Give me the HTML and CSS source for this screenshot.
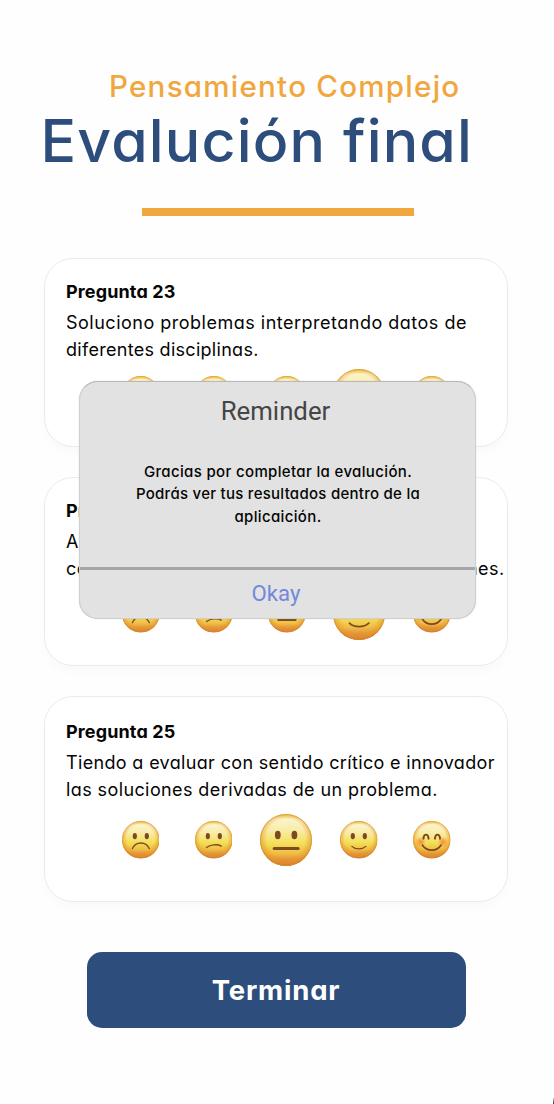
FILE: index.html
```
<!DOCTYPE html>
<html lang="es">
<head>
<meta charset="utf-8">
<title>Evalución final</title>
<link rel="stylesheet" href="styles.css">
</head>
<body>
<svg class="defs" width="0" height="0" aria-hidden="true">
  <defs>
    <linearGradient id="skin" x1="0" y1="0" x2="0" y2="1">
      <stop offset="0" stop-color="#f3cf45"/>
      <stop offset=".1" stop-color="#fbf3cc"/>
      <stop offset=".3" stop-color="#f9edab"/>
      <stop offset=".58" stop-color="#f3de55"/>
      <stop offset=".76" stop-color="#f0bd45"/>
      <stop offset="1" stop-color="#d26a30"/>
    </linearGradient>
    <radialGradient id="rim" cx=".5" cy=".46" r=".54">
      <stop offset=".68" stop-color="#e69a2a" stop-opacity="0"/>
      <stop offset=".9" stop-color="#e6962c" stop-opacity=".6"/>
      <stop offset="1" stop-color="#d0702f" stop-opacity=".9"/>
    </radialGradient>
    <radialGradient id="blush">
      <stop offset="0" stop-color="#f4693c" stop-opacity=".75"/>
      <stop offset="1" stop-color="#f4693c" stop-opacity="0"/>
    </radialGradient>
    <g id="ball"><circle cx="26" cy="26" r="26" fill="url(#skin)"/><circle cx="26" cy="26" r="26" fill="url(#rim)"/><circle cx="26" cy="26" r="25.5" fill="none" stroke="#d6962f" stroke-opacity=".65" stroke-width="1"/></g>
    <g id="eyes" fill="#7c4a22"><ellipse cx="17.8" cy="21" rx="2.9" ry="4.2"/><ellipse cx="34.4" cy="21" rx="2.9" ry="4.2"/></g>
    <symbol id="sad" viewBox="0 0 52 52"><use href="#ball"/><use href="#eyes"/><path class="mouth" d="M14.3 38.5C19 27.8 33 27.8 38 38.5"/></symbol>
    <symbol id="unsure" viewBox="0 0 52 52"><use href="#ball"/><use href="#eyes"/><path class="mouth" d="M16 36.8C21 32.5 31 31.8 36.5 34.8"/></symbol>
    <symbol id="neutral" viewBox="0 0 52 52"><use href="#ball"/><use href="#eyes"/><path class="mouth flat" d="M14.2 34.4H38.2"/></symbol>
    <symbol id="smile" viewBox="0 0 52 52"><use href="#ball"/><use href="#eyes"/><path class="mouth" d="M16.5 35.2C21 39.8 31 39.8 35.8 35.2"/></symbol>
    <symbol id="happy" viewBox="0 0 52 52"><use href="#ball"/><circle cx="10.5" cy="29" r="7.5" fill="url(#blush)"/><circle cx="41.5" cy="29" r="7.5" fill="url(#blush)"/><path class="mouth eye" d="M14.5 24.5C15 17 21 17 21.6 24.5M30.4 24.5C31 17 37 17 37.5 24.5"/><path class="mouth grin" d="M13.2 33.5C19 42.5 33 42.5 38.8 33.5"/></symbol>
  </defs>
</svg>
<main class="screen">
  <header class="header">
    <p class="course">Pensamiento Complejo</p>
    <h1 class="title">Evalución final</h1>
    <div class="rule"></div>
  </header>

  <section class="card first">
    <h2 class="card-title">Pregunta 23</h2>
    <p class="card-text"><span class="t1">Soluciono problemas interpretando datos de</span><br><span class="t2">diferentes disciplinas.</span></p>
    <div class="scale">
      <span><svg class="face"><use href="#sad"/></svg></span>
      <span><svg class="face"><use href="#unsure"/></svg></span>
      <span><svg class="face"><use href="#neutral"/></svg></span>
      <span><svg class="face selected"><use href="#smile"/></svg></span>
      <span><svg class="face"><use href="#happy"/></svg></span>
    </div>
  </section>

  <section class="card second">
    <h2 class="card-title">Pregunta 24</h2>
    <p class="card-text"><span class="t3">Analizo problemas de investigación</span><br><span class="t4">contemplando el contexto para crear soluciones.</span></p>
    <div class="scale">
      <span><svg class="face"><use href="#sad"/></svg></span>
      <span><svg class="face"><use href="#unsure"/></svg></span>
      <span><svg class="face"><use href="#neutral"/></svg></span>
      <span><svg class="face selected"><use href="#smile"/></svg></span>
      <span><svg class="face"><use href="#happy"/></svg></span>
    </div>
  </section>

  <section class="card third">
    <h2 class="card-title">Pregunta 25</h2>
    <p class="card-text"><span class="t5">Tiendo a evaluar con sentido crítico e innovador</span><br><span class="t6">las soluciones derivadas de un problema.</span></p>
    <div class="scale">
      <span><svg class="face"><use href="#sad"/></svg></span>
      <span><svg class="face"><use href="#unsure"/></svg></span>
      <span><svg class="face selected"><use href="#neutral"/></svg></span>
      <span><svg class="face"><use href="#smile"/></svg></span>
      <span><svg class="face"><use href="#happy"/></svg></span>
    </div>
  </section>

  <button class="finish">Terminar</button>

  <div class="dialog" role="dialog">
    <h3 class="dialog-title">Reminder</h3>
    <p class="dialog-text"><span class="d1">Gracias por completar la evalución.</span><br><span class="d2">Podrás ver tus resultados dentro de la</span><br><span class="d3">aplicaición.</span></p>
    <button class="dialog-action">Okay</button>
  </div>
  <i class="corner"></i>
</main>
</body>
</html>
```
FILE: styles.css
```
* { box-sizing: border-box; }
body { margin: 0; background: #fefefe; color: #050505; font-family: Inter, "Open Sans", sans-serif; font-feature-settings: "cv11"; }
h1, h2, h3, p { margin: 0; }
button { border: 0; padding: 0; font-family: inherit; font-feature-settings: inherit; }
.defs { display: block; height: 0; }
.screen { position: relative; width: 554px; height: 1104px; padding: 68px 46px 0 44px; overflow: hidden; }
.header { height: 190px; white-space: nowrap; }
.course { padding-left: 65px; font-size: 29.6px; line-height: 36px; font-weight: 500; color: #f0a73e; letter-spacing: 1.22px; }
.title { margin-left: -3.5px; font-size: 59px; line-height: 74px; font-weight: 500; color: #2d4e7c; letter-spacing: 1.15px; }
.rule { width: 272px; height: 8px; margin: 30px 0 0 97.5px; background: #f0a73e; }
.card { height: 189px; padding: 19px 0 0 21px; border: 1px solid #e8ebf2; border-radius: 29px; background: #fff; box-shadow: 0 6px 10px rgba(0, 0, 0, .02); white-space: nowrap; }
.second { margin-top: 30px; }
.third { height: 206px; margin-top: 30px; padding-top: 21px; }
.card-title { height: 32px; font-size: 18px; line-height: 27px; font-weight: 700; letter-spacing: .13px; }
.card-text { height: 53px; font-size: 18px; line-height: 26.5px; }
.t1 { letter-spacing: .5px; }
.t2 { letter-spacing: .29px; }
.t3, .t4 { letter-spacing: .4px; }
.t4 { display: inline-block; width: 438.5px; text-align: justify; text-align-last: justify; }
.t5 { letter-spacing: .34px; }
.t6 { letter-spacing: .4px; }
.scale { display: flex; align-items: center; width: 364px; height: 52px; margin: 6px 0 0 38.3px; }
.scale span { display: flex; justify-content: center; flex: 1; }
.third .scale { margin-top: 11px; }
.face { display: block; flex: none; width: 37.5px; height: 37.5px; }
.selected { width: 52px; height: 52px; }
.mouth { fill: none; stroke: #7c4a22; stroke-width: 1.8; stroke-linecap: round; }
.flat { stroke-width: 3; }
.eye { stroke-width: 2.7; }
.grin { stroke-width: 2.5; }
.finish { display: block; width: 379px; height: 76px; margin: 50px 0 0 42.5px; border-radius: 15px; background: #2d4e7c; color: #fff; font-size: 27.5px; font-weight: 700; letter-spacing: .8px; }
.dialog { position: absolute; left: 79px; top: 381px; width: 397px; height: 238px; display: flex; flex-direction: column; border: 1px solid #cfcfcf; border-top-color: #b8b8b8; border-radius: 19px; background: #e2e2e2; text-align: center; overflow: hidden; box-shadow: 0 0 1px #bbb; }
.dialog-title { height: 79px; padding: 11px 4px 0 0; font: 400 25.8px/36px Roboto, sans-serif; color: #454545; }
.dialog-text { flex: 1; padding-left: 1px; font-size: 15px; line-height: 22.4px; font-weight: 500; }
.d1, .d3 { letter-spacing: .35px; }
.d2 { letter-spacing: .27px; }
.dialog-action { height: 51px; padding: 0 3px 2px 0; border-top: 3px solid #a6a6a6; background: transparent; font: 400 22.2px/44px Roboto, sans-serif; color: #7188dc; }
.corner { position: absolute; right: 0; bottom: 0; width: 1px; height: 6px; background: linear-gradient(#ccc, #333); }
```
